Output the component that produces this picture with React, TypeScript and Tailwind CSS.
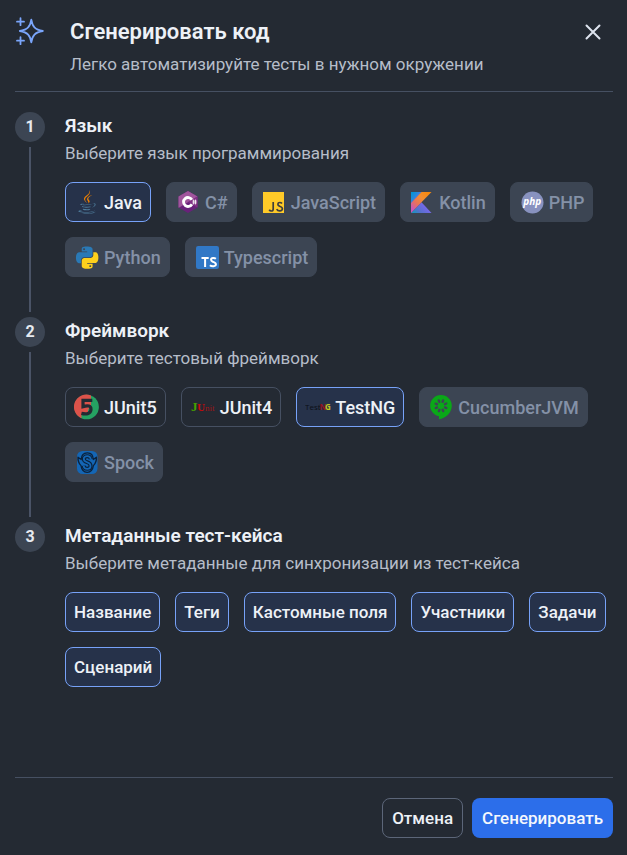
import { useState, type ReactNode } from 'react'

type Option = {
  name: string
  icon?: ReactNode
  disabled?: boolean
}

function SparklesIcon() {
  return (
    <svg width="30" height="30" viewBox="0 0 30 30" fill="none" stroke="#7aa5fb" strokeWidth="1.8" strokeLinecap="round" strokeLinejoin="round" aria-hidden="true">
      <path d="M16.3 3.6C17.4 10.4 19.8 13.6 27.8 15C19.8 16.4 17.4 19.6 16.3 26.4C15.2 19.6 12.800 16.4 4.8 15C12.800 13.6 15.2 10.4 16.3 3.6Z" />
      <path d="M5.5 2.2v7M2 5.7h7M5.5 21.2v7M2 24.7h7" />
    </svg>
  )
}

function JavaIcon() {
  return (
    <svg width="24" height="26" viewBox="0 0 128 128" aria-hidden="true">
      <g fill="#4f7d9c">
        <path d="M47.617 98.12s-4.767 2.774 3.397 3.71c9.892 1.13 14.947.968 25.845-1.092 0 0 2.871 1.795 6.873 3.351-24.439 10.47-55.308-.607-36.115-5.969zm-2.988-13.665s-5.348 3.959 2.823 4.805c10.567 1.091 18.91 1.18 33.354-1.6 0 0 1.993 2.025 5.132 3.131-29.542 8.64-62.446.68-41.309-6.336z" />
        <path d="M102.123 108.229s3.529 2.91-3.888 5.159c-14.102 4.272-58.706 5.56-71.094.171-4.451-1.938 3.899-4.625 6.526-5.192 2.739-.593 4.303-.485 4.303-.485-4.953-3.487-32.013 6.85-13.743 9.815 49.821 8.076 90.817-3.637 77.896-9.468zM49.912 70.294s-22.686 5.389-8.033 7.348c6.188.828 18.518.638 30.011-.326 9.39-.789 18.813-2.474 18.813-2.474s-3.308 1.419-5.704 3.053c-23.042 6.061-67.544 3.238-54.731-2.958 10.832-5.239 19.644-4.643 19.644-4.643zm40.697 22.747c23.421-12.167 12.591-23.86 5.032-22.285-1.848.385-2.677.72-2.677.72s.688-1.079 2-1.543c14.953-5.255 26.451 15.503-4.823 23.725 0-.002.359-.327.468-.617z" />
        <path d="M52.214 126.021c22.476 1.437 57-.8 57.817-11.436 0 0-1.571 4.032-18.577 7.231-19.186 3.612-42.854 3.191-56.887.874 0 .001 2.875 2.381 17.647 3.331z" />
      </g>
      <g fill="#f08000">
        <path d="M69.802 61.271c6.025 6.935-1.58 13.17-1.58 13.17s15.289-7.891 8.269-17.777c-6.559-9.215-11.587-13.792 15.635-29.58 0 .001-42.731 10.67-22.324 34.187z" />
        <path d="M76.491 1.587S89.459 14.563 64.188 34.51c-20.266 16.006-4.621 25.13-.007 35.559-11.831-10.673-20.509-20.07-14.688-28.815C58.041 28.42 81.722 22.195 76.491 1.587z" />
      </g>
    </svg>
  )
}

function CSharpIcon() {
  return (
    <svg width="24" height="24" viewBox="0 0 24 24" aria-hidden="true">
      <path d="M12 1 21.5 6.4V17.6L12 23 2.5 17.6V6.4Z" fill="#69217a" />
      <path d="M12 1 21.5 6.4 2.8 17.8 2.5 17.6V6.4Z" fill="#a0569c" />
      <path d="M21.5 6.4V17.6L12 12Z" fill="#813084" />
      <path d="M15.9 14.3A4.5 4.5 0 1 1 15.9 9.7" fill="none" stroke="#fff" strokeWidth="2.8" />
      <path d="M17.6 9.6v4.8M19.5 9.6v4.8M16.4 11.1h4.3M16.4 12.9h4.3" stroke="#fff" strokeWidth=".8" />
    </svg>
  )
}

function JavaScriptIcon() {
  return (
    <svg width="24" height="24" viewBox="0 0 24 24" aria-hidden="true">
      <path d="M1 2h21v21H1z" fill="#ffca28" />
      <path d="M11.2 12v6.9q0 2.1-2 2.1-1.3 0-2-1.2" fill="none" stroke="#3e3e3e" strokeWidth="1.7" />
      <path d="M20 13.6q-.8-1.1-2.2-1.1c-2.4 0-2.6 2.8-.4 3.6 1.7.6 3.1 1 3 2.7-.1 2.7-4.5 2.8-5.7.4" fill="none" stroke="#3e3e3e" strokeWidth="1.7" />
    </svg>
  )
}

function KotlinIcon() {
  return (
    <svg width="24" height="24" viewBox="0 0 24 24" aria-hidden="true">
      <defs>
        <linearGradient id="kt-a" x1="2" y1="23" x2="13" y2="12" gradientUnits="userSpaceOnUse">
          <stop offset=".1" stopColor="#1c93c1" />
          <stop offset=".4" stopColor="#5471ca" />
          <stop offset="1" stopColor="#7b67ee" />
        </linearGradient>
        <linearGradient id="kt-b" x1="2" y1="2" x2="11" y2="9" gradientUnits="userSpaceOnUse">
          <stop offset="0" stopColor="#0095d5" />
          <stop offset=".4" stopColor="#238ad9" />
          <stop offset="1" stopColor="#7b67ee" />
        </linearGradient>
        <linearGradient id="kt-c" x1="3" y1="20" x2="20" y2="3" gradientUnits="userSpaceOnUse">
          <stop offset="0" stopColor="#c757bc" />
          <stop offset=".3" stopColor="#e8725c" />
          <stop offset=".6" stopColor="#f18e33" />
          <stop offset="1" stopColor="#f88909" />
        </linearGradient>
      </defs>
      <path d="M1 23 11.5 12.3 21.5 23Z" fill="url(#kt-a)" />
      <path d="M1 2h11L1 13.5Z" fill="url(#kt-b)" />
      <path d="M11.5 2 1 13V23L21.5 2Z" fill="url(#kt-c)" />
    </svg>
  )
}

function PhpIcon() {
  return (
    <svg width="24" height="24" viewBox="0 0 24 24" aria-hidden="true">
      <circle cx="12.5" cy="12.5" r="11" fill="#8892bf" />
      <text x="12.3" y="15" textAnchor="middle" fill="#fff" fontFamily="Open Sans, sans-serif" fontSize="10" fontStyle="italic" fontWeight="700">php</text>
    </svg>
  )
}

function PythonIcon() {
  return (
    <svg width="24" height="24" viewBox="0 0 24 24" aria-hidden="true">
      <g transform="translate(1 1.5) scale(.93)">
        <path fill="#2a79b5" d="M14.25.18l.9.2.73.26.59.3.45.32.34.34.25.34.16.33.1.3.04.26.02.2-.01.13V8.5l-.05.63-.13.55-.21.46-.26.38-.3.31-.33.25-.35.19-.35.14-.33.1-.3.07-.26.04-.21.02H8.77l-.69.05-.59.14-.5.22-.41.27-.33.32-.27.35-.2.36-.15.37-.1.35-.07.32-.04.27-.02.21v3.06H3.17l-.21-.03-.28-.07-.32-.12-.35-.18-.36-.26-.36-.36-.35-.46-.32-.59-.28-.73-.21-.88-.14-1.05-.05-1.23.06-1.22.16-1.04.24-.87.32-.71.36-.57.4-.44.42-.33.42-.24.4-.16.36-.1.32-.05.24-.01h.16l.06.01h8.16v-.83H6.18l-.01-2.75-.02-.37.05-.34.11-.31.17-.28.25-.26.31-.23.38-.2.44-.18.51-.15.58-.12.64-.1.71-.06.77-.04.84-.02 1.27.05zm-6.3 1.98l-.23.33-.08.41.08.41.23.34.33.22.41.09.41-.09.33-.22.23-.34.08-.41-.08-.41-.23-.33-.33-.22-.41-.09-.41.09z" />
        <path fill="#fdd01c" d="M21.04 6.11l.28.06.32.12.35.18.36.27.36.35.35.47.32.59.28.73.21.88.14 1.04.05 1.23-.06 1.23-.16 1.04-.24.86-.32.71-.36.57-.4.45-.42.33-.42.24-.4.16-.36.09-.32.05-.24.02-.16-.01h-8.22v.82h5.84l.01 2.76.02.36-.05.34-.11.31-.17.29-.25.25-.31.24-.38.2-.44.17-.51.15-.58.13-.64.09-.71.07-.77.04-.84.01-1.27-.04-1.07-.14-.9-.2-.73-.25-.59-.3-.45-.33-.34-.34-.25-.34-.16-.33-.1-.3-.04-.25-.02-.2.01-.13v-5.34l.05-.64.13-.54.21-.46.26-.38.3-.32.33-.24.35-.2.35-.14.33-.1.3-.06.26-.04.21-.02.13-.01h5.84l.69-.05.59-.14.5-.21.41-.28.33-.32.27-.35.2-.36.15-.36.1-.35.07-.32.04-.28.02-.21V6.07h2.09l.14.01zm-6.47 14.25l-.23.33-.08.41.08.41.23.33.33.23.41.08.41-.08.33-.23.23-.33.08-.41-.08-.41-.23-.33-.33-.23-.41-.08-.41.08z" />
      </g>
    </svg>
  )
}

function TypeScriptIcon() {
  return (
    <svg width="24" height="24" viewBox="0 0 24 24" aria-hidden="true">
      <rect x="1" y="1" width="23" height="23" rx="2.2" fill="#3178c6" />
      <path d="M6.5 13h7.2M10.1 13v9" fill="none" stroke="#fff" strokeWidth="2" />
      <path d="M20.9 13.8q-1.2-.9-2.8-.8c-2.8.2-2.6 2.8-.4 3.7 1.8.7 3.3 1.1 3.2 2.6-.1 2.4-4.3 2.4-6 .9" fill="none" stroke="#fff" strokeWidth="2" />
    </svg>
  )
}

function JUnit5Icon() {
  return (
    <svg width="26" height="26" viewBox="0 0 26 26" aria-hidden="true">
      <circle cx="12.6" cy="13" r="12.3" fill="#25a162" />
      <path d="M17 1.5A12.3 12.3 0 0 0 7.5 24.200V20.5H14V16L17 11Z" fill="#dc524a" />
      <path d="M18.3 6.4H9V12.6Q17 10.2 17 15.3C17 20.4 11.6 20.4 7.4 19.4" fill="none" stroke="#242a33" strokeWidth="3.2" />
    </svg>
  )
}

function JUnit4Icon() {
  return (
    <svg width="24" height="24" viewBox="0 0 24 24" fontFamily="Liberation Serif, serif" aria-hidden="true">
      <text x="0" y="16" fontSize="13" fontWeight="700" fill="#47a000">J</text>
      <text x="6" y="16" fontSize="11" fontWeight="700" fill="#c40909">U</text>
      <text x="14" y="16" fontSize="9" fill="#9c1518">nit</text>
    </svg>
  )
}

function TestNgIcon() {
  return (
    <svg width="26" height="24" viewBox="0 0 26 24" fontFamily="Open Sans, sans-serif" fontSize="8" aria-hidden="true">
      <text x="0" y="15" fill="#0c0f16">Test</text>
      <text x="14.5" y="15" fontWeight="700" fill="#96101d">N</text>
      <text x="20" y="15" fontWeight="700" fill="#bfc520">G</text>
    </svg>
  )
}

function CucumberIcon() {
  return (
    <svg width="24" height="26" viewBox="0 0 24 26" aria-hidden="true">
      <path d="M12 1C6 1 1.2 5.8 1.2 11.8C1.2 17 5 21.3 10 22.3V25.3C16.5 24.6 22.8 19 22.8 11.8C22.8 5.8 18 1 12 1Z" fill="#0aa818" />
      <g fill="#3c4553">
        {[22, 67, 112, 157, 202, 247, 292, 337].map((angle) => (
          <ellipse key={angle} cx="12" cy="6.8" rx="1.3" ry="2" transform={`rotate(${angle} 12 11.8)`} />
        ))}
      </g>
    </svg>
  )
}

function SpockIcon() {
  return (
    <svg width="24" height="24" viewBox="0 0 24 24" fill="none" strokeLinejoin="round" aria-hidden="true">
      <rect x="2" y="1" width="20.5" height="23" rx="5.5" fill="#1466b5" />
      <path d="M6.2 9.5Q6.4 3 12.2 2.8T18.3 9.5L21.4 7.2Q21.8 12 18.4 15.6 17.4 22 12.2 22.4 7 22 6 15.6 2.6 12 3 7.2Z" stroke="#0b223c" strokeWidth="1.3" />
      <path d="M15.8 9.2Q15.3 6.2 12.2 6.2C7.6 6.2 7.7 10.8 12.1 12.2C17 13.8 16.4 18.8 12.2 18.8Q9 18.8 8.6 15.8" stroke="#0b223c" strokeWidth="4" />
      <path d="M15.8 9.2Q15.3 6.2 12.2 6.2C7.6 6.2 7.7 10.8 12.1 12.2C17 13.8 16.4 18.8 12.2 18.8Q9 18.8 8.6 15.8" stroke="#1466b5" strokeWidth="1.7" />
    </svg>
  )
}

const languages: Option[] = [
  { name: 'Java', icon: <JavaIcon /> },
  { name: 'C#', icon: <CSharpIcon />, disabled: true },
  { name: 'JavaScript', icon: <JavaScriptIcon />, disabled: true },
  { name: 'Kotlin', icon: <KotlinIcon />, disabled: true },
  { name: 'PHP', icon: <PhpIcon />, disabled: true },
  { name: 'Python', icon: <PythonIcon />, disabled: true },
  { name: 'Typescript', icon: <TypeScriptIcon />, disabled: true },
]

const frameworks: Option[] = [
  { name: 'JUnit5', icon: <JUnit5Icon /> },
  { name: 'JUnit4', icon: <JUnit4Icon /> },
  { name: 'TestNG', icon: <TestNgIcon /> },
  { name: 'CucumberJVM', icon: <CucumberIcon />, disabled: true },
  { name: 'Spock', icon: <SpockIcon />, disabled: true },
]

const metadata: Option[] = [
  { name: 'Название' },
  { name: 'Теги' },
  { name: 'Кастомные поля' },
  { name: 'Участники' },
  { name: 'Задачи' },
  { name: 'Сценарий' },
]

type ChipProps = {
  option: Option
  selected: boolean
  onClick: () => void
}

function Chip({ option, selected, onClick }: ChipProps) {
  const { name, icon, disabled } = option
  return (
    <button
      type="button"
      disabled={disabled}
      aria-pressed={selected}
      onClick={onClick}
      className={[
        'flex h-10 items-center gap-1 rounded-lg border px-2 font-medium whitespace-nowrap',
        icon ? 'text-[18px]' : 'text-[17px] leading-7',
        disabled
          ? 'border-[#3c4553] bg-[#3c4553] text-[#8491a7]'
          : selected
            ? 'border-[#77a2f8] bg-[#26324a] text-[#edf1f7]'
            : 'border-[#465062] text-[#edf1f7]',
      ].join(' ')}
    >
      {icon && <span className="flex w-[26px] shrink-0 justify-center">{icon}</span>}
      {name}
    </button>
  )
}

type StepProps = {
  number: number
  title: string
  description: string
  last?: boolean
  children: ReactNode
}

function Step({ number, title, description, last, children }: StepProps) {
  return (
    <li className="flex gap-5">
      <div className="flex w-[30px] shrink-0 flex-col items-center gap-[5px] pb-[5px]">
        <span className="flex size-[30px] items-center justify-center rounded-full bg-[#3c4553] text-base font-bold text-[#e6eaf0]">
          {number}
        </span>
        {!last && <span className="w-0.5 flex-1 bg-[#4a5366]" />}
      </div>
      <section className="min-w-0 flex-1 pb-10">
        <h2 className="text-[19px] leading-7 font-semibold text-[#edf1f7]">{title}</h2>
        <p className="text-[17px] leading-[26px] text-[#b6bdc9]">{description}</p>
        <div className="mt-4 flex flex-wrap gap-[15px]">{children}</div>
      </section>
    </li>
  )
}

export default function App() {
  const [language, setLanguage] = useState('Java')
  const [framework, setFramework] = useState('TestNG')
  const [fields, setFields] = useState(metadata.map((m) => m.name))

  const toggleField = (name: string) => {
    setFields((prev) => (prev.includes(name) ? prev.filter((f) => f !== name) : [...prev, name]))
  }

  return (
    <div className="flex min-h-screen flex-col bg-[#242a33] pr-[14px] pl-[15px] font-['Roboto',sans-serif]">
      <header className="flex items-start border-b border-[#465062] pt-4 pb-3">
        <SparklesIcon />
        <div className="ml-[25px] flex-1">
          <h1 className="text-[22px] leading-8 font-semibold text-[#edf1f7]">Сгенерировать код</h1>
          <p className="mt-0.5 text-[17px] leading-[29px] text-[#b6bdc9]">Легко автоматизируйте тесты в нужном окружении</p>
        </div>
        <button type="button" aria-label="Закрыть" className="flex h-8 w-10 items-center justify-center text-[#dde3ee]">
          <svg width="16" height="16" viewBox="0 0 16 16" stroke="currentColor" strokeWidth="2" strokeLinecap="round" aria-hidden="true">
            <path d="M1.5 1.5l13 13M14.5 1.5l-13 13" />
          </svg>
        </button>
      </header>

      <ol className="flex-1 pt-5">
        <Step number={1} title="Язык" description="Выберите язык программирования">
          {languages.map((o) => (
            <Chip key={o.name} option={o} selected={language === o.name} onClick={() => setLanguage(o.name)} />
          ))}
        </Step>
        <Step number={2} title="Фреймворк" description="Выберите тестовый фреймворк">
          {frameworks.map((o) => (
            <Chip key={o.name} option={o} selected={framework === o.name} onClick={() => setFramework(o.name)} />
          ))}
        </Step>
        <Step number={3} title="Метаданные тест-кейса" description="Выберите метаданные для синхронизации из тест-кейса" last>
          {metadata.map((o) => (
            <Chip key={o.name} option={o} selected={fields.includes(o.name)} onClick={() => toggleField(o.name)} />
          ))}
        </Step>
      </ol>

      <footer className="flex justify-end gap-[9px] border-t border-[#465062] pt-5 pb-[17px]">
        <button type="button" className="h-10 rounded-lg border border-[#5c6679] px-[9px] text-[17px] leading-7 font-medium text-[#edf1f7]">
          Отмена
        </button>
        <button type="button" className="h-10 rounded-lg bg-[#2c6eea] px-[10px] text-[17px] leading-7 font-medium text-[#f4f7fd]">
          Сгенерировать
        </button>
      </footer>
    </div>
  )
}
